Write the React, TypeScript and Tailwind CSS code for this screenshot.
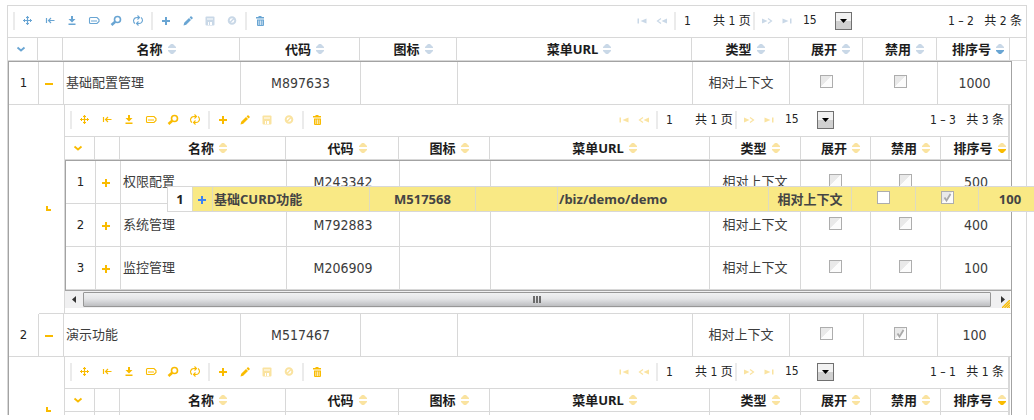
import type { ReactNode } from "react";

type Tone = "blue" | "amber";

const SANS = "font-['Noto_Sans','Noto_Sans_CJK_SC',sans-serif]";
const BODY = "font-['DejaVu_Sans_Condensed','DejaVu_Sans','Noto_Sans_CJK_SC',sans-serif]";

const tones = {
  blue: { on: "text-[#69a5d3]", off: "text-[#c9d8e7]" },
  amber: { on: "text-[#f9bb00]", off: "text-[#fae3a0]" },
};

const glyphs: Record<string, ReactNode> = {
  move: (
    <g stroke="currentColor" fill="none">
      <path d="M5.5 1v9M1 5.5h9" strokeWidth="1.200" />
      <path d="M4 2.500h3M4 8.500h3M2.500 4v3M8.500 4v3" />
    </g>
  ),
  first: (
    <g stroke="currentColor" fill="none">
      <path d="M2.500 3v5M4.500 5.500h6M7 3L4.500 5.500 7 8" strokeWidth="1.200" />
    </g>
  ),
  download: <path fill="currentColor" d="M5 1h2v3h2.500L6 7.500 2.500 4H5zM2.500 8.500h7V10h-7z" />,
  label: (
    <g>
      <path fill="none" stroke="currentColor" strokeWidth="1.100" d="M1.500 3.500q0-1 1-1H9L11 4.500v2L9 8.500H2.500q-1 0-1-1z" />
      <path fill="currentColor" d="M3.500 5h1v2h-1zM5.500 5h1v2h-1zM7.500 5h1v2h-1z" />
    </g>
  ),
  search: (
    <g>
      <circle cx="7.500" cy="4.500" r="3" fill="none" stroke="currentColor" strokeWidth="1.600" />
      <path d="M5.200 6.800L1.500 10" stroke="currentColor" strokeWidth="2.600" fill="none" />
    </g>
  ),
  refresh: (
    <g fill="none" stroke="currentColor" strokeWidth="1.100">
      <path d="M3 8.500Q1.500 7.500 1.500 5.500 2 2.500 5 2.500h2.500M5.500 .5l2 2-2 2" />
      <path d="M9 2.500Q10.500 3.500 10.500 5.500 10 8.500 7 8.500H4.500M6.500 6.500l-2 2 2 2" />
    </g>
  ),
  plus: <path fill="currentColor" d="M5 2h2v3h3v2H7v3H5V7H2V5h3z" />,
  minus: <path fill="currentColor" d="M2 5h8v2H2z" />,
  pencil: <path fill="currentColor" d="M1.500 10.500L2.200 7.800 7 3l2 2-4.800 4.800zM7.600 2.400L9 1l2 2-1.400 1.400z" />,
  save: (
    <g>
      <path fill="currentColor" d="M1.500 2.500q0-1 1-1h7q1 0 1 1v7q0 1-1 1h-7q-1 0-1-1z" />
      <path fill="#fff" d="M3 3.500h6v1H3zM4 7h4v3H4z" />
      <path fill="currentColor" d="M5 7h1v3H5z" />
    </g>
  ),
  ban: (
    <g fill="none" stroke="currentColor" strokeWidth="2">
      <circle cx="6" cy="5.500" r="3.300" />
      <path d="M3.700 7.800l4.600-4.600" strokeWidth="1.500" />
    </g>
  ),
  trash: (
    <g>
      <path fill="currentColor" d="M2 2h2.500V1h3v1H10v1.500H2zM3 4.500h7V10q0 1-1 1H4q-1 0-1-1z" />
      <path stroke="#fff" strokeWidth=".7" d="M4.800 5.500v4.500M6.500 5.500v4.500M8.200 5.500v4.500" />
    </g>
  ),
  pageFirst: <path fill="currentColor" d="M1.500 3.500H3v5H1.500zM10.500 3.500v5L4.500 6z" />,
  pagePrev: (
    <g>
      <path fill="currentColor" d="M11 3.500v5L5.500 6z" />
      <path d="M5 3.500L1.500 6 5 8.500" fill="none" stroke="currentColor" strokeWidth="1.200" />
    </g>
  ),
  pageNext: (
    <g>
      <path fill="currentColor" d="M1 3.500v5L6.500 6z" />
      <path d="M7 3.500L10.500 6 7 8.500" fill="none" stroke="currentColor" strokeWidth="1.200" />
    </g>
  ),
  pageLast: <path fill="currentColor" d="M9 3.500h1.500v5H9zM1.500 3.500v5l6-2.500z" />,
  chevron: <path fill="none" stroke="currentColor" strokeWidth="1.800" d="M2.500 4.500L6 7.500l3.500-3" />,
  corner: <path fill="currentColor" d="M2 3h2v3h3v2H2z" />,
};

function Icon({ name }: { name: string }) {
  return (
    <svg width="12" height="12" viewBox="0 0 12 12" className="block" aria-hidden="true">
      {glyphs[name]}
    </svg>
  );
}

function ToolButton({ name, label, color, width = "w-[22px]" }: { name: string; label: string; color: string; width?: string }) {
  return (
    <button type="button" aria-label={label} className={`flex h-5 shrink-0 items-center justify-center ${width} ${color}`}>
      <Icon name={name} />
    </button>
  );
}

const Separator = () => <span className="mx-[2px] h-[18px] w-[2px] shrink-0 bg-[#ebebeb]" />;

function Toolbar({ tone, count }: { tone: Tone; count: number }) {
  const { on, off } = tones[tone];
  return (
    <div className={`flex h-[31px] items-center pb-[2px] pl-[3px] text-xs text-[#222] ${BODY}`}>
      <Separator />
      <ToolButton name="move" label="移动" color={on} />
      <ToolButton name="first" label="收起" color={on} />
      <ToolButton name="download" label="下载" color={on} />
      <ToolButton name="label" label="标签" color={on} />
      <ToolButton name="search" label="查找" color={on} />
      <ToolButton name="refresh" label="刷新" color={on} />
      <Separator />
      <ToolButton name="plus" label="新增" color={on} />
      <ToolButton name="pencil" label="编辑" color={on} />
      <ToolButton name="save" label="保存" color={off} />
      <ToolButton name="ban" label="取消" color={off} />
      <Separator />
      <ToolButton name="trash" label="删除" color={on} />
      <div className="ml-auto flex items-center">
        <ToolButton name="pageFirst" label="首页" color={off} width="w-5" />
        <ToolButton name="pagePrev" label="上一页" color={off} width="w-5" />
        <Separator />
        <input aria-label="页码" defaultValue="1" className="h-5 w-8 bg-transparent pl-[6px] outline-none" />
        <span className="w-[41px] whitespace-nowrap pl-[3px]">共 1 页</span>
        <Separator />
        <ToolButton name="pageNext" label="下一页" color={off} width="w-5" />
        <ToolButton name="pageLast" label="末页" color={off} width="w-5" />
        <div className="relative ml-[3px] h-[18px] w-[52px]">
          <select aria-label="每页条数" className="h-4 w-full appearance-none bg-transparent pl-[3px] leading-[14px] outline-none">
            <option>15</option>
          </select>
          <span className="pointer-events-none absolute right-0 top-0 flex h-[18px] w-[17px] items-center justify-center border border-[#707070] bg-linear-to-b from-[#f2f2f2] from-50% to-[#d0d0d0] to-50%">
            <svg width="7" height="4" viewBox="0 0 7 4" aria-hidden="true">
              <path d="M0 0h7L3.500 4z" fill="#000" />
            </svg>
          </span>
        </div>
      </div>
      <div className="w-[174px] whitespace-pre pr-1 text-right">{`1 – ${count}   共 ${count} 条`}</div>
    </div>
  );
}

function SortMark({ tone, active }: { tone: Tone; active?: boolean }) {
  const { on, off } = tones[tone];
  return (
    <svg width="8" height="10" viewBox="0 0 8 10" aria-hidden="true" className={`shrink-0 ${off}`}>
      <path d="M3 0h2l3 3v1H0V3z" fill="currentColor" />
      <path d="M0 6h8v1L5 10H3L0 7z" fill="currentColor" className={active ? on : off} />
    </svg>
  );
}

const titles = ["名称", "代码", "图标", "菜单URL", "类型", "展开", "禁用", "排序号"];

function Columns({ nested, tail }: { nested?: boolean; tail?: boolean }) {
  return nested ? (
    <colgroup>
      <col className="w-[30px]" />
      <col className="w-[25px]" />
      <col className="w-[166px]" />
      <col className="w-[113px]" />
      <col className="w-[91px]" />
      <col />
      <col className="w-[91px]" />
      <col className="w-[70px]" />
      <col className="w-[70px]" />
      <col className={tail ? "w-[67px]" : "w-[70px]"} />
    </colgroup>
  ) : (
    <colgroup>
      <col className="w-[30px]" />
      <col className="w-[25px]" />
      <col className="w-[177px]" />
      <col className="w-[120px]" />
      <col className="w-[97px]" />
      <col />
      <col className="w-[97px]" />
      <col className="w-[74px]" />
      <col className="w-[74px]" />
      <col className="w-[73px]" />
      {tail && <col className="w-[16px]" />}
    </colgroup>
  );
}

const TABLE = "w-full table-fixed border-separate border-spacing-0";
const LINE = "border-[#d8d8d8]";

function HeaderTable({ tone, nested, filler }: { tone: Tone; nested?: boolean; filler?: boolean }) {
  const th = `h-6 border-y border-r ${LINE} p-0`;
  const last = nested ? `h-6 border-y ${LINE} p-0` : th;
  return (
    <table className={`${TABLE} text-[13px] leading-4 font-bold text-[#1c1c1c] ${SANS}`}>
      <Columns nested={nested} tail />
      <thead>
        <tr>
          <th className={th}>
            <button type="button" aria-label="列选项" className={`mx-auto block pr-1 ${tones[tone].on}`}>
              <Icon name="chevron" />
            </button>
          </th>
          <th className={th} />
          {titles.map((t, i) => (
            <th key={t} className={i === titles.length - 1 ? last : th}>
              <span className="flex items-center justify-center gap-[5px] pl-[10px]">
                <span className="whitespace-nowrap">{t}</span>
                <SortMark tone={tone} active={i === titles.length - 1} />
              </span>
            </th>
          ))}
          {!nested && <th className={`border-y ${LINE} p-0`} />}
        </tr>
      </thead>
      {filler && (
        <tbody>
          <tr>
            {Array.from({ length: 10 }, (_, i) => (
              <td key={i} className={`h-[50px] p-0 ${i < 9 ? `border-r ${LINE}` : ""}`} />
            ))}
          </tr>
        </tbody>
      )}
    </table>
  );
}

function Check({ label, checked, plain }: { label: string; checked?: boolean; plain?: boolean }) {
  return (
    <span className="relative mx-auto mb-1 block size-[13px]">
      <input
        type="checkbox"
        disabled
        aria-label={label}
        defaultChecked={checked}
        className={`block size-[13px] appearance-none border border-[#adadad] ${plain ? "bg-white" : "bg-linear-to-br from-[#e9e9e9] from-45% to-[#fcfcfc] to-50%"}`}
      />
      {checked && (
        <svg width="13" height="13" viewBox="0 0 13 13" className="pointer-events-none absolute inset-0" aria-hidden="true">
          <path d="M3.500 6.500L5.500 9.500 9.500 3" fill="none" stroke="#a9a9a9" strokeWidth="1.800" />
        </svg>
      )}
    </span>
  );
}

interface Item {
  no: number;
  name: string;
  code: string;
  order: number;
  disabled?: boolean;
}

function ItemRow({ item, open }: { item: Item; open?: boolean }) {
  const td = `h-[43px] border-b border-r ${LINE} p-0 text-center whitespace-nowrap`;
  return (
    <tr>
      <td className={`${td} text-[#222]`}>{item.no}</td>
      <td className={td}>
        <button type="button" aria-label={open ? "收起子表" : "展开子表"} className={`mx-auto block pr-1 pt-[2px] ${tones.amber.on}`}>
          <Icon name={open ? "minus" : "plus"} />
        </button>
      </td>
      <td className={`h-[43px] border-b border-r ${LINE} p-0 pl-[2px] text-left`}>{item.name}</td>
      <td className={`${td} text-sm`}>{item.code}</td>
      <td className={td} />
      <td className={td} />
      <td className={td}>相对上下文</td>
      <td className={td}><Check label="展开" /></td>
      <td className={td}><Check label="禁用" checked={item.disabled} /></td>
      <td className={`h-[43px] border-b ${LINE} p-0 text-center text-sm`}>{item.order}</td>
    </tr>
  );
}

function SubRow({ children }: { children: ReactNode }) {
  return (
    <tr>
      <td className="p-0" />
      <td className={`border-b ${LINE} p-0 align-middle ${tones.amber.on}`}>
        <span className="flex justify-center pr-1">
          <Icon name="corner" />
        </span>
      </td>
      <td colSpan={8} className={`border-b border-l ${LINE} p-0 align-top`}>
        {children}
      </td>
    </tr>
  );
}

function ScrollBar() {
  return (
    <div className="relative mr-px flex h-[17px] items-center bg-[#f0f0f1]">
      <button type="button" aria-label="向左滚动" className="flex w-[18px] justify-center">
        <svg width="4" height="7" viewBox="0 0 4 7" aria-hidden="true"><path d="M4 0v7L0 3.500z" fill="#333" /></svg>
      </button>
      <div className="flex h-[15px] flex-1 items-center justify-center gap-px rounded-[1px] border border-[#979797] bg-linear-to-b from-[#f0f1f2] via-[#e4e5e7] via-45% to-[#bdbec1]">
        <span className="h-[7px] w-[2px] bg-[#6c6c6c]" />
        <span className="h-[7px] w-[2px] bg-[#6c6c6c]" />
        <span className="h-[7px] w-[2px] bg-[#6c6c6c]" />
      </div>
      <button type="button" aria-label="向右滚动" className="flex w-[19px] justify-center pl-1">
        <svg width="4" height="7" viewBox="0 0 4 7" aria-hidden="true"><path d="M0 0v7l4-3.500z" fill="#333" /></svg>
      </button>
      <svg width="8" height="8" viewBox="0 0 8 8" className="absolute right-0 bottom-0" aria-hidden="true">
        <path d="M0 8l8-8M2.500 8L8 2.500M5 8l3-3M7.200 8l.8-.8" stroke="#f9bb00" strokeWidth="1.300" />
      </svg>
    </div>
  );
}

const roots: Item[] = [
  { no: 1, name: "基础配置管理", code: "M897633", order: 1000 },
  { no: 2, name: "演示功能", code: "M517467", order: 100, disabled: true },
];

const children: Item[] = [
  { no: 1, name: "权限配置", code: "M243342", order: 500 },
  { no: 2, name: "系统管理", code: "M792883", order: 400 },
  { no: 3, name: "监控管理", code: "M206909", order: 100 },
];

function DraggedRow() {
  const td = `h-6 border-r border-[#dedbc0] p-0 text-center whitespace-nowrap`;
  return (
    <div className="absolute top-[186px] left-[167px]">
      <table className={`table-fixed border-separate border-spacing-0 border border-[#d8d8d8] bg-[#f9e985] text-[13px] leading-4 font-bold text-[#444] w-[875px] ${SANS}`}>
        <colgroup>
          <col className="w-[25px]" />
          <col className="w-[20px]" />
          <col className="w-[157px]" />
          <col className="w-[106px]" />
          <col className="w-[82px]" />
          <col className="w-[211px]" />
          <col className="w-[83px]" />
          <col className="w-[64px]" />
          <col className="w-[63px]" />
          <col />
        </colgroup>
        <tbody>
          <tr>
            <td className={`${td} bg-white text-[#222]`}>1</td>
            <td className={td}>
              <button type="button" aria-label="展开子表" className="mx-auto block pt-[2px] pr-px text-[#3b82f6]">
                <Icon name="plus" />
              </button>
            </td>
            <td className="border-r border-[#dedbc0] p-0 pl-px text-left whitespace-nowrap">基础CURD功能</td>
            <td className={td}>M517568</td>
            <td className={td} />
            <td className="border-r border-[#dedbc0] p-0 pl-px text-left">/biz/demo/demo</td>
            <td className={td}>相对上下文</td>
            <td className={td}><Check label="展开" plain /></td>
            <td className={td}><Check label="禁用" checked /></td>
            <td className="p-0 text-center">100</td>
          </tr>
        </tbody>
      </table>
    </div>
  );
}

export default function App() {
  return (
    <main className="relative h-screen overflow-hidden bg-white pt-[5px] pb-[5px]">
      <div className={`mx-[7px] h-full overflow-hidden border border-b-0 ${LINE}`}>
        <Toolbar tone="blue" count={2} />
        <HeaderTable tone="blue" />
        <div className="mr-[14px] border-x border-t border-[#a3a3a3]">
          <table className={`${TABLE} text-[13px] leading-4 text-[#3c3c3c] ${BODY}`}>
            <Columns />
            <tbody>
              <ItemRow item={roots[0]} open />
              <SubRow>
                <div className={`mr-px border-r-2 ${LINE}`}>
                  <Toolbar tone="amber" count={3} />
                  <HeaderTable tone="amber" nested />
                </div>
                <div className="border-y border-l border-[#a3a3a3]">
                  <table className={TABLE}>
                    <Columns nested />
                    <tbody>
                      {children.map((c) => (
                        <ItemRow key={c.code} item={c} />
                      ))}
                    </tbody>
                  </table>
                </div>
                <div className="pb-[5px]">
                  <ScrollBar />
                </div>
              </SubRow>
              <ItemRow item={roots[1]} open />
              <SubRow>
                <div className={`mr-px border-r-2 ${LINE}`}>
                  <Toolbar tone="amber" count={1} />
                  <HeaderTable tone="amber" nested filler />
                </div>
              </SubRow>
            </tbody>
          </table>
        </div>
      </div>
      <DraggedRow />
    </main>
  );
}
